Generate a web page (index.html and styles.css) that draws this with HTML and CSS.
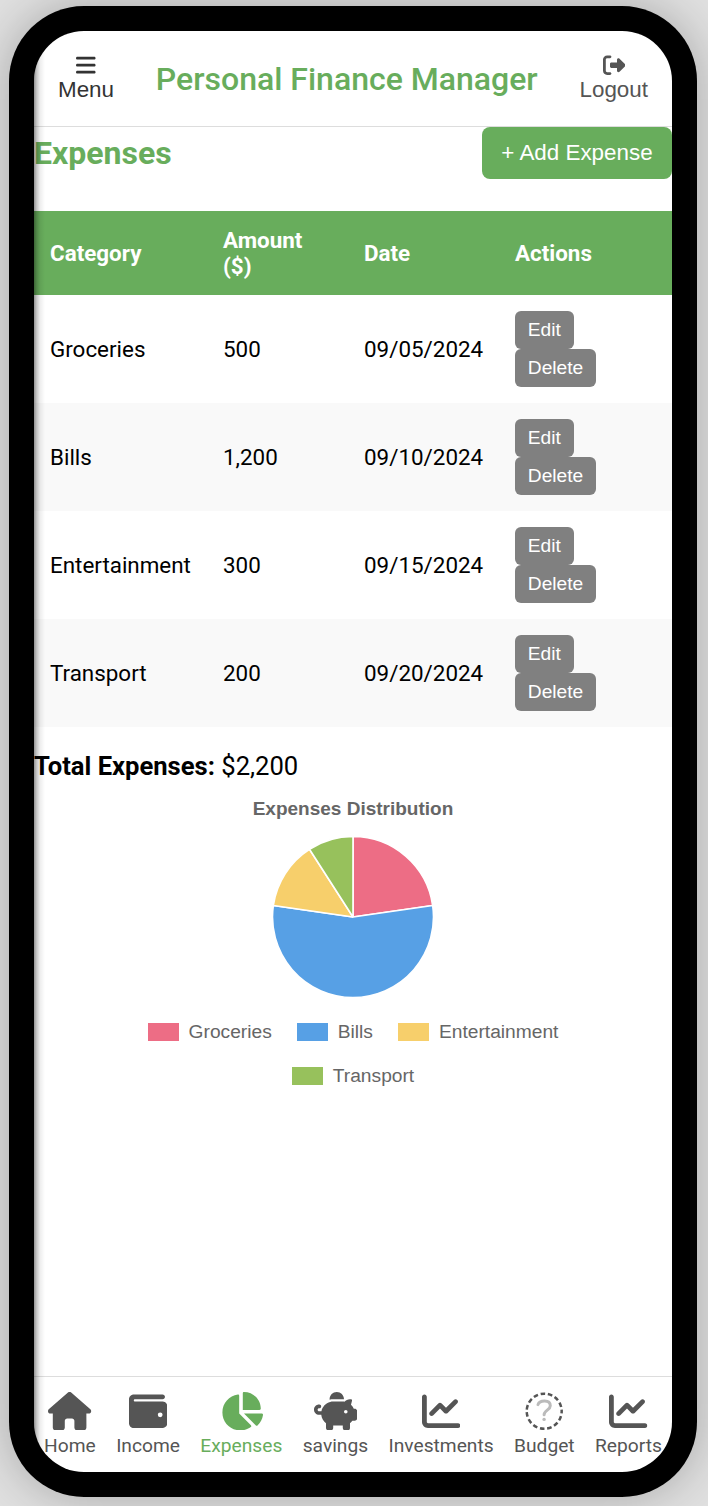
FILE: index.html
```html
<!DOCTYPE html>
<html lang="en">
<head>
<meta charset="utf-8">
<title>Personal Finance Manager</title>
<link rel="stylesheet" href="styles.css">
</head>
<body>
<svg class="sprite" aria-hidden="true">
  <symbol id="chart-line" viewBox="0 0 512 512"><path d="M64 64c0-17.7-14.3-32-32-32S0 46.3 0 64V400c0 44.2 35.8 80 80 80H480c17.7 0 32-14.3 32-32s-14.3-32-32-32H80c-8.8 0-16-7.2-16-16V64zm406.6 86.6c12.5-12.5 12.5-32.8 0-45.3s-32.8-12.5-45.3 0L320 210.7l-57.4-57.4c-12.5-12.5-32.8-12.5-45.3 0l-112 112c-12.5 12.5-12.5 32.8 0 45.3s32.8 12.5 45.3 0L240 221.3l57.4 57.4c12.5 12.5 32.8 12.5 45.3 0l128-128z"/></symbol>
</svg>
<div class="phone">
  <div class="screen">
    <header class="topbar">
      <button class="top-btn menu">
        <svg class="top-icon" viewBox="0 0 448 512"><path d="M0 96C0 78.3 14.3 64 32 64H416c17.7 0 32 14.3 32 32s-14.3 32-32 32H32C14.3 128 0 113.7 0 96zM0 256c0-17.7 14.3-32 32-32H416c17.7 0 32 14.3 32 32s-14.3 32-32 32H32c-17.7 0-32-14.3-32-32zM448 416c0 17.7-14.3 32-32 32H32c-17.7 0-32-14.3-32-32s14.3-32 32-32H416c17.7 0 32 14.3 32 32z"/></svg>
        <span>Menu</span>
      </button>
      <h1 class="brand">Personal Finance Manager</h1>
      <button class="top-btn">
        <svg class="top-icon" viewBox="0 0 512 512"><path d="M377.9 105.9L500.7 228.7c7.2 7.2 11.3 17.1 11.3 27.3s-4.1 20.1-11.3 27.3L377.9 406.1c-6.4 6.4-15 9.9-24 9.9c-18.7 0-33.9-15.2-33.9-33.9l0-62.1-128 0c-17.7 0-32-14.3-32-32l0-64c0-17.7 14.3-32 32-32l128 0 0-62.1c0-18.7 15.2-33.9 33.9-33.9c9 0 17.6 3.6 24 9.9zM160 96L96 96c-17.7 0-32 14.3-32 32l0 256c0 17.7 14.3 32 32 32l64 0c17.7 0 32 14.3 32 32s-14.3 32-32 32l-64 0c-53 0-96-43-96-96L0 128C0 75 43 32 96 32l64 0c17.7 0 32 14.3 32 32s-14.3 32-32 32z"/></svg>
        <span>Logout</span>
      </button>
    </header>
    <main class="content">
      <div class="page-head">
        <h2 class="page-title">Expenses</h2>
        <button class="add-btn">+ Add Expense</button>
      </div>
      <table class="expenses">
        <thead><tr><th class="col-cat">Category</th><th class="col-amt">Amount ($)</th><th class="col-date">Date</th><th class="col-act">Actions</th></tr></thead>
        <tbody>
          <tr><td>Groceries</td><td>500</td><td>09/05/2024</td><td><div class="actions"><button class="act">Edit</button><button class="act">Delete</button></div></td></tr>
          <tr><td>Bills</td><td>1,200</td><td>09/10/2024</td><td><div class="actions"><button class="act">Edit</button><button class="act">Delete</button></div></td></tr>
          <tr><td>Entertainment</td><td>300</td><td>09/15/2024</td><td><div class="actions"><button class="act">Edit</button><button class="act">Delete</button></div></td></tr>
          <tr><td>Transport</td><td>200</td><td>09/20/2024</td><td><div class="actions"><button class="act">Edit</button><button class="act">Delete</button></div></td></tr>
        </tbody>
      </table>
      <p class="total"><strong>Total Expenses:</strong> $2,200</p>
      <section class="chart">
        <h3 class="chart-title">Expenses Distribution</h3>
        <svg class="pie" viewBox="-81 -81 162 162">
          <g stroke="#fff" stroke-width="1.6" stroke-linejoin="bevel">
            <path fill="#ed6d85" d="M0 0V-80.5A80.5 80.5 0 0 1 79.68 -11.46Z"/>
            <path fill="#57a0e5" d="M0 0L79.68 -11.46A80.5 80.5 0 1 1 -79.68 -11.46Z"/>
            <path fill="#f7cf6b" d="M0 0L-79.68 -11.46A80.5 80.5 0 0 1 -43.52 -67.72Z"/>
            <path fill="#97c15c" d="M0 0L-43.52 -67.72A80.5 80.5 0 0 1 0 -80.5Z"/>
          </g>
        </svg>
        <ul class="legend">
          <li><i class="swatch pink"></i>Groceries</li>
          <li><i class="swatch blue"></i>Bills</li>
          <li><i class="swatch yellow"></i>Entertainment</li>
          <li><i class="swatch green"></i>Transport</li>
        </ul>
      </section>
    </main>
    <nav class="tabs">
      <a class="tab"><svg class="tab-icon" viewBox="0 0 576 512"><path d="M575.8 255.5c0 18-15 32.1-32 32.1h-32l.7 160.2c0 2.7-.2 5.4-.5 8.1V472c0 22.1-17.9 40-40 40H456c-1.1 0-2.2 0-3.3-.1c-1.4 .1-2.8 .1-4.2 .1H416 392c-22.1 0-40-17.9-40-40V448 384c0-17.7-14.3-32-32-32H256c-17.7 0-32 14.3-32 32v64 24c0 22.1-17.9 40-40 40H160 128.1c-1.5 0-3-.1-4.5-.2c-1.2 .1-2.4 .2-3.6 .2H104c-22.1 0-40-17.9-40-40V360c0-.9 0-1.9 .1-2.8V287.6H32c-18 0-32-14-32-32.1c0-9 3-17 10-24L266.4 8c7-7 15-8 22-8s15 2 21 7L564.8 231.5c8 7 12 15 11 24z"/></svg><span>Home</span></a>
      <a class="tab"><svg class="tab-icon" viewBox="0 0 512 512"><path d="M64 32C28.7 32 0 60.7 0 96V416c0 35.3 28.7 64 64 64H448c35.3 0 64-28.7 64-64V192c0-35.3-28.7-64-64-64H80c-8.8 0-16-7.2-16-16s7.2-16 16-16H448c17.7 0 32-14.3 32-32s-14.3-32-32-32H64zM416 272a32 32 0 1 1 0 64 32 32 0 1 1 0-64z"/></svg><span>Income</span></a>
      <a class="tab active"><svg class="tab-icon" viewBox="0 0 576 512"><path d="M304 240V16.6c0-9 7-16.6 16-16.6C443.7 0 544 100.3 544 224c0 9-7.6 16-16.6 16H304zM32 272C32 150.7 122.1 50.3 239 34.3c9.2-1.3 17 6.1 17 15.4V288L412.5 444.5c6.7 6.7 6.2 17.7-1.5 23.1C371.8 495.6 323.8 512 272 512C139.5 512 32 404.6 32 272zm526.4 16c9.3 0 16.6 7.8 15.4 17c-7.7 55.9-34.6 105.6-73.9 142.3c-6 5.6-15.4 5.2-21.2-.7L320 288H558.4z"/></svg><span>Expenses</span></a>
      <a class="tab"><svg class="tab-icon" viewBox="0 0 576 512"><path d="M400 96l0 .7c-5.3-.4-10.6-.7-16-.7H256c-16.5 0-32.5 2.1-47.8 6c-.1-2-.2-4-.2-6c0-53 43-96 96-96s96 43 96 96zm-16 32c3.5 0 7 .1 10.4 .3c4.2 .3 8.4 .7 12.6 1.3C424.6 109.1 450.8 96 480 96h11.5c10.4 0 18 9.8 15.5 19.9l-13.8 55.2c15.8 14.8 28.7 32.8 37.5 52.9H544c17.7 0 32 14.3 32 32v96c0 17.7-14.3 32-32 32H512c-9.1 12.1-19.9 22.9-32 32v64c0 17.7-14.3 32-32 32H416c-17.7 0-32-14.3-32-32V448H256v32c0 17.7-14.3 32-32 32H192c-17.7 0-32-14.3-32-32V416c-34.9-26.2-58.7-66.3-63.2-112H68c-37.6 0-68-30.4-68-68s30.4-68 68-68h4c13.3 0 24 10.7 24 24s-10.7 24-24 24H68c-11 0-20 9-20 20s9 20 20 20H99.2c12.1-59.8 57.7-107.5 116.3-122.8c12.9-3.4 26.5-5.2 40.5-5.2H384zm64 136a24 24 0 1 0 -48 0 24 24 0 1 0 48 0z"/></svg><span>savings</span></a>
      <a class="tab"><svg class="tab-icon" viewBox="0 0 512 512"><use href="#chart-line"/></svg><span>Investments</span></a>
      <a class="tab"><svg class="tab-icon" viewBox="0 0 38.4 38.4"><circle cx="19.2" cy="19.2" r="17.5" fill="none" stroke="#555" stroke-width="2.5" stroke-dasharray="4.6 2.73" stroke-dashoffset="2.3"/><path d="M13 12.6C14.500 8 25.200 7.400 25.300 13.700C25.300 18 19.100 18.300 19.100 22.800" fill="none" stroke="#bbb" stroke-width="3" stroke-linecap="round"/><circle cx="19.1" cy="27.4" r="1.7" fill="#bbb"/></svg><span>Budget</span></a>
      <a class="tab"><svg class="tab-icon" viewBox="0 0 512 512"><use href="#chart-line"/></svg><span>Reports</span></a>
    </nav>
  </div>
</div>
</body>
</html>
```
FILE: styles.css
```css
* { box-sizing: border-box; }
body {
  margin: 0;
  padding: 6px 11px 9px 9px;
  height: 1506px;
  overflow: hidden;
  background: #e0e0e0;
  font-family: Roboto, "Liberation Sans", sans-serif;
  font-size: 22.4px;
  color: #000;
}
button { border: 0; margin: 0; font-family: "Liberation Sans", Arial, sans-serif; }
svg { display: block; fill: currentColor; }
.sprite { display: none; }
.phone {
  height: 1491px;
  padding: 25px;
  border-radius: 75px;
  background: #000;
  box-shadow: 0 0 48px rgba(0, 0, 0, .25);
}
.screen {
  position: relative;
  display: flex;
  flex-direction: column;
  height: 1441px;
  border-radius: 50px;
  overflow: hidden;
  background: #fff;
}
.screen::after {
  content: "";
  position: absolute;
  inset: 0 auto 0 0;
  width: 11px;
  background: linear-gradient(90deg, rgba(0,0,0,.42), rgba(0,0,0,.22) 25%, rgba(0,0,0,.07) 55%, transparent);
}
.topbar {
  display: flex;
  align-items: center;
  justify-content: space-between;
  height: 96px;
  padding: 0 24px;
  border-bottom: 1px solid #ddd;
}
.top-btn {
  display: flex;
  flex-direction: column;
  align-items: center;
  padding: 0;
  background: none;
  color: #555;
  font-size: 22.4px;
  line-height: 25px;
}
.top-btn.menu { color: #333; }
.top-icon { height: 22.4px; margin: -1px 0 1px; }
.brand { margin: 0; font-size: 32px; font-weight: 500; color: #68ad5c; }
.content { flex: 1; }
.page-head {
  display: flex;
  align-items: center;
  justify-content: space-between;
  margin-bottom: 32px;
}
.page-title { margin: 0; font-size: 32px; font-weight: 700; color: #68ad5c; }
.add-btn {
  width: 190px;
  height: 52px;
  padding: 0;
  border-radius: 8px;
  background: #68ad5c;
  color: #fff;
  font-size: 22.4px;
}
.expenses { width: 100%; table-layout: fixed; border-collapse: collapse; }
.col-cat { width: 173px; }
.col-amt { width: 141px; }
.col-date { width: 151px; }
.expenses th {
  height: 84px;
  padding: 0 16px;
  background: #68ad5c;
  color: #fff;
  text-align: left;
  line-height: 26px;
}
.expenses td { height: 108px; padding: 0 0 0 16px; }
.expenses tbody tr:nth-child(even) { background: #f9f9f9; }
.actions { display: flex; flex-direction: column; align-items: flex-start; }
.act {
  height: 38px;
  padding: 0 12.8px;
  border-radius: 6px;
  background: #808080;
  color: #fff;
  font-size: 19.2px;
}
.total { margin: 24px 0 0; font-size: 25.6px; line-height: 30px; }
.chart {
  display: flex;
  flex-direction: column;
  align-items: center;
  padding-top: 17px;
  font-family: "Liberation Sans", Arial, sans-serif;
  color: #666;
}
.chart-title { margin: 0; font-size: 19px; line-height: 22px; }
.pie { width: 162px; height: 162px; margin-top: 16px; }
.legend {
  display: flex;
  flex-wrap: wrap;
  justify-content: center;
  gap: 22px 25px;
  width: 460px;
  margin: 23px 0 0;
  padding: 0;
  list-style: none;
  font-size: 19.2px;
  line-height: 22px;
}
.legend li { display: flex; align-items: center; gap: 10px; }
.swatch { width: 31px; height: 18px; }
.pink { background: #ed6d85; }
.blue { background: #57a0e5; }
.yellow { background: #f7cf6b; }
.green { background: #97c15c; }
.tabs {
  display: flex;
  justify-content: center;
  gap: 20.4px;
  height: 96px;
  padding-top: 15px;
  border-top: 1px solid #ddd;
}
.tab {
  display: flex;
  flex-direction: column;
  align-items: center;
  gap: 4px;
  color: #555;
  font-size: 19.2px;
  line-height: 23px;
}
.tab.active { color: #68ad5c; }
.tab-icon { height: 38.4px; }
```
